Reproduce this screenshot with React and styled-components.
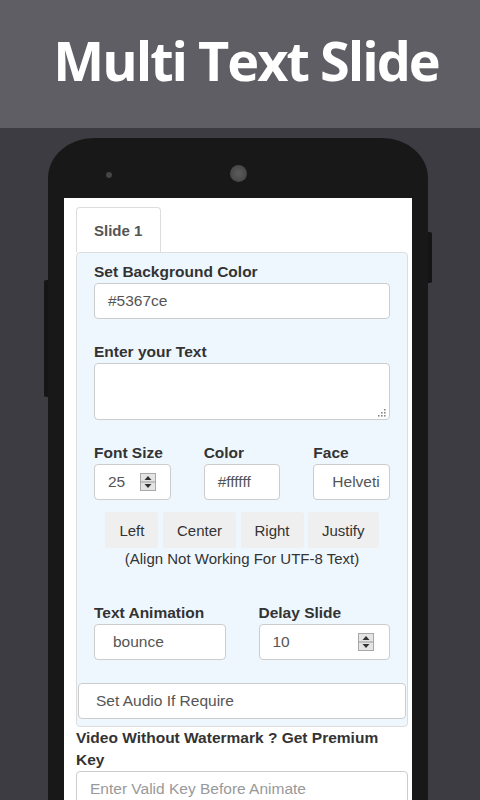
import React from 'react';
import styled, { createGlobalStyle } from 'styled-components';

const GlobalStyle = createGlobalStyle`
  html, body {
    margin: 0;
    padding: 0;
  }
  body {
    width: 480px;
    height: 800px;
    overflow: hidden;
    background: #3d3c42;
    font-family: 'Liberation Sans', Arial, sans-serif;
  }
  * {
    box-sizing: border-box;
  }
`;

const Page = styled.div`
  display: flex;
  flex-direction: column;
  height: 800px;
  overflow: hidden;
`;

const Banner = styled.header`
  flex: none;
  height: 128px;
  background: #5f5e65;
  display: flex;
  align-items: center;
  justify-content: center;
  padding: 0 0 8px 12px;
`;

const Title = styled.h1`
  margin: 0;
  color: #ffffff;
  font-family: 'Open Sans', sans-serif;
  font-weight: 700;
  font-size: 54px;
  letter-spacing: -2px;
  line-height: 1;
`;

const Stage = styled.div`
  flex: 1;
  background: #3d3c42;
  padding: 10px 52px 0 48px;
  overflow: hidden;
`;

const Phone = styled.div`
  position: relative;
  height: 720px;
  background: #181818;
  border-radius: 46px 46px 0 0 / 40px 40px 0 0;
  padding: 0 16px;
`;

const SideKey = styled.span`
  position: absolute;
  width: 4px;
  background: #151515;
  top: ${({ $top }) => $top}px;
  height: ${({ $height }) => $height}px;
  ${({ $side }) => ($side === 'left' ? 'left: -4px;' : 'right: -4px;')}
  border-radius: ${({ $side }) => ($side === 'left' ? '2px 0 0 2px' : '0 2px 2px 0')};
`;

const Bezel = styled.div`
  position: relative;
  height: 60px;
  display: flex;
  justify-content: center;
  padding-top: 27px;
`;

const Camera = styled.span`
  width: 17px;
  height: 17px;
  border-radius: 50%;
  background: radial-gradient(circle at 50% 50%, #5c5c5c 0%, #4a4a4a 60%, #3a3a3a 100%);
`;

const Sensor = styled.span`
  position: absolute;
  left: 42px;
  top: 34px;
  width: 6px;
  height: 6px;
  border-radius: 50%;
  background: #454545;
`;

const Screen = styled.div`
  background: #ffffff;
  min-height: 660px;
  padding: 9px 4px 0 12px;
  color: #333;
`;

const TabBar = styled.div`
  display: flex;
`;

const Tab = styled.div`
  width: 85px;
  height: 45px;
  border: 1px solid #dddddd;
  border-bottom: none;
  border-radius: 4px 4px 0 0;
  display: flex;
  align-items: center;
  padding-left: 17px;
  font-weight: 700;
  font-size: 15px;
  color: #555;
`;

const Panel = styled.section`
  background: #eff7fe;
  border: 1px solid #dddddd;
  border-radius: 4px;
  padding-bottom: 7px;
`;

const PanelBody = styled.div`
  padding: 9px 17px 0;
`;

const Group = styled.div`
  margin-top: ${({ $gap }) => $gap || 0}px;
`;

const Label = styled.label`
  display: block;
  font-weight: 700;
  font-size: 15.5px;
  line-height: 20px;
  color: #333;
  margin-bottom: 1px;
  white-space: nowrap;
`;

const Field = styled.div`
  position: relative;
  height: ${({ $tall }) => ($tall ? 57 : 36)}px;
  background: #ffffff;
  border: 1px solid #cccccc;
  border-radius: 4px;
  display: flex;
  align-items: center;
  padding: 0 ${({ $padRight }) => $padRight ?? 13}px 0 ${({ $pad }) => $pad || 13}px;
  font-size: 15.5px;
  color: #555;
  white-space: nowrap;
  overflow: hidden;
  min-width: 0;
`;

const FieldText = styled.span`
  flex: 1;
  min-width: 0;
  overflow: hidden;
`;

const Grip = styled.svg`
  position: absolute;
  right: 3px;
  bottom: 2px;
`;

const Columns = styled.div`
  display: grid;
  grid-template-columns: repeat(${({ $count }) => $count}, minmax(0, 1fr));
  column-gap: 33px;
`;

const AlignRow = styled.div`
  display: flex;
  justify-content: center;
  gap: 4.5px;
  margin-top: 12px;
`;

const AlignButton = styled.button`
  height: 36px;
  padding: 0 14px;
  border: none;
  border-radius: 3px;
  background: #efefef;
  font-family: 'Liberation Sans', Arial, sans-serif;
  font-size: 15px;
  color: #333;
`;

const Note = styled.p`
  margin: 2px 0 0;
  text-align: center;
  font-size: 15px;
  line-height: 18px;
  color: #333;
`;

const AudioBox = styled.div`
  margin: 23px 1px 0;
  height: 36px;
  background: #ffffff;
  border: 1px solid #cccccc;
  border-radius: 4px;
  display: flex;
  align-items: center;
  padding-left: 17px;
  font-size: 15.5px;
  color: #555;
`;

const PremiumLabel = styled.div`
  font-weight: 700;
  font-size: 15.5px;
  line-height: 22px;
  color: #333;
  padding-right: 2px;
`;

const KeyInput = styled.div`
  height: 36px;
  border: 1px solid #cccccc;
  border-radius: 4px;
  display: flex;
  align-items: center;
  padding-left: 13px;
  font-size: 15.5px;
  color: #999;
`;

const SpinBox = styled.svg`
  flex: none;
  margin-right: ${({ $right }) => $right}px;
`;

const Spinner = ({ right }) => (
  <SpinBox $right={right} width="16" height="18" viewBox="0 0 16 18">
    <rect x="0.5" y="0.5" width="15" height="17" fill="#e4e4e4" stroke="#a8a8a8" />
    <line x1="1" y1="9" x2="15" y2="9" stroke="#9a9a9a" />
    <path d="M8 3 L11.5 7 L4.5 7 Z" fill="#333" />
    <path d="M8 15 L11.5 11 L4.5 11 Z" fill="#333" />
  </SpinBox>
);

const ResizeGrip = () => (
  <Grip width="9" height="9" viewBox="0 0 9 9">
    {[
      [7, 1],
      [7, 4],
      [4, 4],
      [7, 7],
      [4, 7],
      [1, 7],
    ].map(([cx, cy]) => (
      <rect key={`${cx}-${cy}`} x={cx} y={cy} width="1.6" height="1.6" fill="#888" />
    ))}
  </Grip>
);

const alignments = ['Left', 'Center', 'Right', 'Justify'];

export default function App() {
  return (
    <Page>
      <GlobalStyle />
      <Banner>
        <Title>Multi Text Slide</Title>
      </Banner>
      <Stage>
        <Phone>
          <SideKey $side="left" $top={142} $height={117} />
          <SideKey $side="right" $top={94} $height={51} />
          <Bezel>
            <Sensor />
            <Camera />
          </Bezel>
          <Screen>
            <TabBar>
              <Tab>Slide 1</Tab>
            </TabBar>
            <Panel>
              <PanelBody>
                <Group>
                  <Label>Set Background Color</Label>
                  <Field>#5367ce</Field>
                </Group>
                <Group $gap={23}>
                  <Label>Enter your Text</Label>
                  <Field $tall>
                    <ResizeGrip />
                  </Field>
                </Group>
                <Group $gap={23}>
                  <Columns $count={3}>
                    <div>
                      <Label>Font Size</Label>
                      <Field>
                        <FieldText>25</FieldText>
                        <Spinner right={1} />
                      </Field>
                    </div>
                    <div>
                      <Label>Color</Label>
                      <Field>#ffffff</Field>
                    </div>
                    <div>
                      <Label>Face</Label>
                      <Field $pad={18} $padRight={4}>
                        <FieldText>Helveti</FieldText>
                      </Field>
                    </div>
                  </Columns>
                </Group>
                <AlignRow>
                  {alignments.map((a) => (
                    <AlignButton key={a}>{a}</AlignButton>
                  ))}
                </AlignRow>
                <Note>(Align Not Working For UTF-8 Text)</Note>
                <Group $gap={35}>
                  <Columns $count={2}>
                    <div>
                      <Label>Text Animation</Label>
                      <Field $pad={18}>bounce</Field>
                    </div>
                    <div>
                      <Label>Delay Slide</Label>
                      <Field>
                        <FieldText>10</FieldText>
                        <Spinner right={2} />
                      </Field>
                    </div>
                  </Columns>
                </Group>
              </PanelBody>
              <AudioBox>Set Audio If Require</AudioBox>
            </Panel>
            <PremiumLabel>Video Without Watermark ? Get Premium Key</PremiumLabel>
            <KeyInput>Enter Valid Key Before Animate</KeyInput>
          </Screen>
        </Phone>
      </Stage>
    </Page>
  );
}
